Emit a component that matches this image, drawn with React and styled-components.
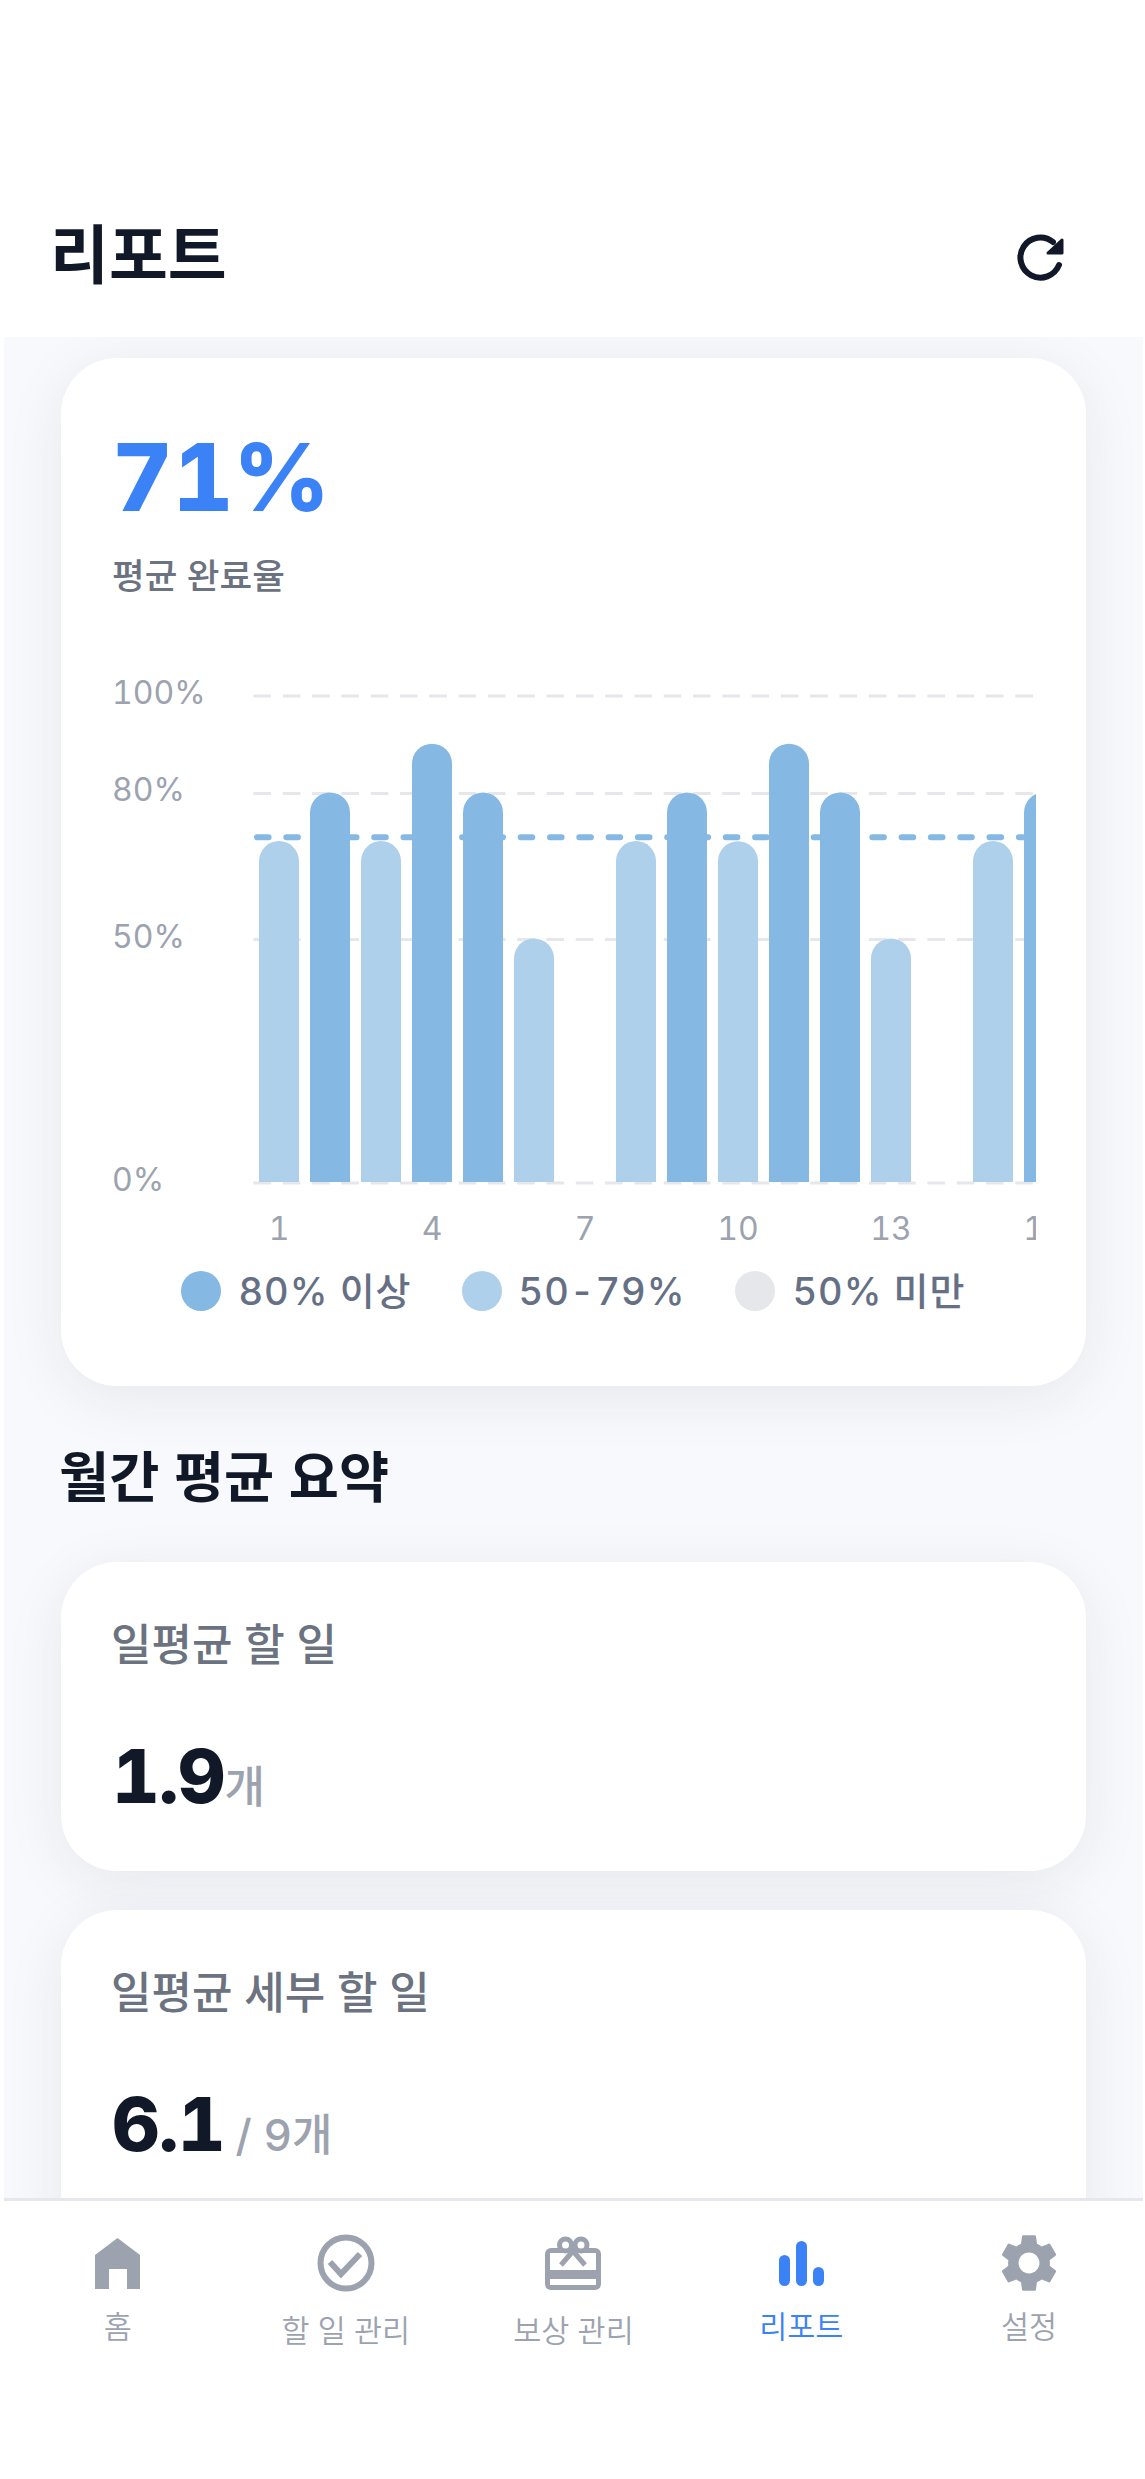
import React from 'react';
import styled, { createGlobalStyle } from 'styled-components';

const FONT = `Inter, "Noto Sans CJK KR", "Noto Sans", sans-serif`;

const Global = createGlobalStyle`
  html, body { margin: 0; padding: 0; background: #fff; }
  body { font-family: ${FONT}; font-variant-numeric: tabular-nums; }
  * { box-sizing: border-box; }
`;

const Page = styled.div`
  width: 1145px;
  height: 2479px;
  overflow: hidden;
  background: #fff;
  display: flex;
  flex-direction: column;
`;

const Header = styled.header`
  height: 337px;
  flex: none;
  padding: 172px 78px 0 50px;
  display: flex;
  align-items: center;
  justify-content: space-between;
`;

const Title = styled.h1`
  margin: 0;
  font-size: 64px;
  line-height: 80px;
  font-weight: 700;
  color: #111827;
`;

const RefreshButton = styled.button`
  border: 0;
  padding: 0;
  background: none;
  width: 54px;
  height: 54px;
  display: flex;
  margin-top: 6px;
`;

const Main = styled.main`
  height: 1861px;
  flex: none;
  margin: 0 2px 0 4px;
  padding: 21px 57px 0;
  background: #f8f9fc;
  overflow: hidden;
`;

const Card = styled.section`
  background: #fff;
  border-radius: 56px;
  box-shadow: 0 12px 60px rgba(30, 40, 70, 0.08);
  padding: ${p => p.$padding};
  margin-bottom: ${p => p.$gap || 0}px;
`;

const BigPercent = styled.div`
  font-size: 94px;
  line-height: 94px;
  font-weight: 800;
  color: #3b82f6;
`;

const SubLabel = styled.div`
  margin-top: 31px;
  font-size: 35.5px;
  line-height: 44px;
  font-weight: 500;
  color: #6b7280;
`;

const ChartSvg = styled.svg`
  display: block;
  margin-top: 61px;
`;

const AxisText = styled.text`
  font-family: ${FONT};
  font-size: 32px;
  fill: #9ca3af;
`;

const Legend = styled.div`
  margin-top: 16px;
  display: flex;
  justify-content: center;
  gap: 50px;
`;

const LegendItem = styled.div`
  display: flex;
  align-items: center;
  gap: 17px;
  font-size: 38px;
  line-height: 40px;
  font-weight: 500;
  letter-spacing: 1px;
  color: #667085;
`;

const Dot = styled.span`
  width: 40px;
  height: 40px;
  border-radius: 50%;
  background: ${p => p.$color};
`;

const SectionTitle = styled.h2`
  margin: 61px 0 55px -2px;
  font-size: 54.5px;
  line-height: 60px;
  font-weight: 700;
  color: #111827;
`;

const StatLabel = styled.div`
  margin-left: -1px;
  font-size: 44px;
  line-height: 50px;
  font-weight: 500;
  color: #6b7280;
`;

const StatRow = styled.div`
  margin-top: 69px;
  display: flex;
  align-items: baseline;
  gap: ${p => p.$gap}px;
`;

const StatValue = styled.span`
  font-size: 74px;
  line-height: 74px;
  font-weight: 800;
  letter-spacing: -1px;
  color: #111827;
`;

const StatUnit = styled.span`
  font-size: 44px;
  line-height: 50px;
  font-weight: 500;
  color: #9ca3af;
`;

const Nav = styled.nav`
  flex: 1;
  margin: 0 2px 0 4px;
  border-top: 3px solid #e5e7eb;
  padding-top: 33px;
  display: grid;
  grid-template-columns: repeat(5, 1fr);
  align-items: start;
  background: #fff;
`;

const Tab = styled.div`
  display: flex;
  flex-direction: column;
  align-items: center;
`;

const TabIcon = styled.div`
  height: 58px;
  display: flex;
  align-items: center;
  justify-content: center;
`;

const TabLabel = styled.span`
  margin-top: ${p => p.$gap}px;
  font-size: 30.5px;
  line-height: 40px;
  font-weight: 350;
  white-space: nowrap;
  color: ${p => (p.$active ? '#3b82f6' : '#9ca3af')};
`;

const GRAY = '#9ca3af';

const HomeIcon = () => (
  <svg width="45" height="51" viewBox="0 0 45 51">
    <path fill={GRAY} d="M22.5 0 45 17v34H32V31H14v20H0V17z" />
  </svg>
);

const CheckIcon = () => (
  <svg width="58" height="58" viewBox="0 0 58 58" fill="none" stroke={GRAY} strokeWidth="6">
    <circle cx="29" cy="29" r="25.5" />
    <path d="M13 28 24 40 43 20" strokeWidth="6" />
  </svg>
);

const GiftIcon = () => (
  <svg width="56" height="54" viewBox="0 0 56 54">
    <rect x="0" y="12" width="56" height="42" rx="6" fill={GRAY} />
    <rect x="5" y="17" width="46" height="17" fill="#fff" />
    <rect x="5" y="43" width="46" height="6" fill="#fff" />
    <g fill="#fff" stroke={GRAY} strokeWidth="5">
      <circle cx="20.5" cy="9" r="6" />
      <circle cx="36" cy="9" r="6" />
    </g>
    <path d="M28 15 16 29M28 15 40 29" stroke={GRAY} strokeWidth="5" fill="none" />
  </svg>
);

const ReportIcon = () => (
  <svg width="45" height="45" viewBox="0 0 45 45" fill="#3b82f6">
    <rect x="0" y="14" width="11" height="31" rx="5.5" />
    <rect x="17" y="0" width="11" height="45" rx="5.5" />
    <rect x="34" y="26" width="11" height="19" rx="5.5" />
  </svg>
);

const GearIcon = () => (
  <svg width="58" height="58" viewBox="2 2 20 20" fill={GRAY}>
    <path d="M19.14 12.94c.04-.3.06-.61.06-.94 0-.32-.02-.64-.07-.94l2.03-1.58c.18-.14.23-.41.12-.61l-1.92-3.32c-.12-.22-.37-.29-.59-.22l-2.39.96c-.5-.38-1.03-.7-1.62-.94l-.36-2.54c-.04-.24-.24-.41-.48-.41h-3.84c-.24 0-.43.17-.47.41l-.36 2.54c-.59.24-1.13.57-1.62.94l-2.39-.96c-.22-.08-.47 0-.59.22L2.74 8.87c-.12.21-.08.47.12.61l2.03 1.58c-.05.3-.09.63-.09.94s.02.64.07.94l-2.03 1.58c-.18.14-.23.41-.12.61l1.92 3.32c.12.22.37.29.59.22l2.39-.96c.5.38 1.03.7 1.62.94l.36 2.54c.05.24.24.41.48.41h3.84c.24 0 .44-.17.47-.41l.36-2.54c.59-.24 1.13-.56 1.62-.94l2.39.96c.22.08.47 0 .59-.22l1.92-3.32c.12-.22.07-.47-.12-.61l-2.01-1.58zM12 15.6c-1.98 0-3.6-1.62-3.6-3.6s1.62-3.6 3.6-3.6 3.6 1.62 3.6 3.6-1.62 3.6-3.6 3.6z" />
  </svg>
);

const RefreshIcon = () => (
  <svg width="54" height="54" viewBox="0 0 54 54" fill="none">
    <path d="M40 11A20 20 0 1 0 46 34" stroke="#111827" strokeWidth="6" strokeLinecap="round" />
    <path d="M49 9v13H35z" fill="#111827" stroke="#111827" strokeWidth="3" strokeLinejoin="round" />
  </svg>
);

const DARK = '#85b8e3';
const LIGHT = '#afd0eb';
const GRID = '#e5e7eb';

const Y_TOP = 36;
const Y_SPAN = 487;
const valueY = v => Y_TOP + (Y_SPAN * (100 - v)) / 100;
const VALUES = [70, 80, 70, 90, 80, 50, 0, 70, 80, 70, 90, 80, 50, 0, 70, 80];
const barColor = v => (v >= 80 ? DARK : LIGHT);

const barPath = (x, v) => {
  const top = valueY(v) - 1;
  const bottom = valueY(0) - 1;
  const w = 40;
  const r = 20;
  return `M${x} ${bottom}V${top + r}A${r} ${r} 0 0 1 ${x + w} ${top + r}V${bottom}Z`;
};

const Chart = () => (
  <ChartSvg width="924" height="595" viewBox="0 0 924 595">
    {[100, 80, 50, 0].map(v => (
      <g key={v}>
        <line x1="141.5" x2="924" y1={valueY(v)} y2={valueY(v)} stroke={GRID} strokeWidth="3" strokeDasharray="17.6 11.7" />
        <AxisText x="0" y={valueY(v) + 8}>{v}%</AxisText>
      </g>
    ))}
    <line x1="145" x2="924" y1={valueY(71)} y2={valueY(71)} stroke={DARK} strokeWidth="6" strokeLinecap="round" strokeDasharray="11.6 17.7" />
    {VALUES.map((v, i) =>
      v > 0 ? <path key={i} d={barPath(147 + i * 51, v)} fill={barColor(v)} /> : null
    )}
    {[1, 4, 7, 10, 13, 16].map((d, i) => (
      <AxisText key={d} x={167 + i * 153} y="580" textAnchor="middle">{d}</AxisText>
    ))}
  </ChartSvg>
);

const TABS = [
  { label: '홈', icon: <HomeIcon />, gap: 15 },
  { label: '할 일 관리', icon: <CheckIcon />, gap: 19 },
  { label: '보상 관리', icon: <GiftIcon />, gap: 19 },
  { label: '리포트', icon: <ReportIcon />, gap: 15, active: true },
  { label: '설정', icon: <GearIcon />, gap: 15 },
];

export default function App() {
  return (
    <Page>
      <Global />
      <Header>
        <Title>리포트</Title>
        <RefreshButton aria-label="새로고침"><RefreshIcon /></RefreshButton>
      </Header>
      <Main>
        <Card $padding="72px 51px 75px">
          <BigPercent>71%</BigPercent>
          <SubLabel>평균 완료율</SubLabel>
          <Chart />
          <Legend>
            <LegendItem><Dot $color={DARK} />80% 이상</LegendItem>
            <LegendItem><Dot $color={LIGHT} />50-79%</LegendItem>
            <LegendItem><Dot $color="#e5e7eb" />50% 미만</LegendItem>
          </Legend>
        </Card>
        <SectionTitle>월간 평균 요약</SectionTitle>
        <Card $padding="58px 51px" $gap={39}>
          <StatLabel>일평균 할 일</StatLabel>
          <StatRow $gap={0}>
            <StatValue>1.9</StatValue>
            <StatUnit>개</StatUnit>
          </StatRow>
        </Card>
        <Card $padding="58px 51px 120px">
          <StatLabel>일평균 세부 할 일</StatLabel>
          <StatRow $gap={11}>
            <StatValue>6.1</StatValue>
            <StatUnit>/ 9개</StatUnit>
          </StatRow>
        </Card>
      </Main>
      <Nav>
        {TABS.map(t => (
          <Tab key={t.label}>
            <TabIcon>{t.icon}</TabIcon>
            <TabLabel $gap={t.gap} $active={t.active}>{t.label}</TabLabel>
          </Tab>
        ))}
      </Nav>
    </Page>
  );
}
